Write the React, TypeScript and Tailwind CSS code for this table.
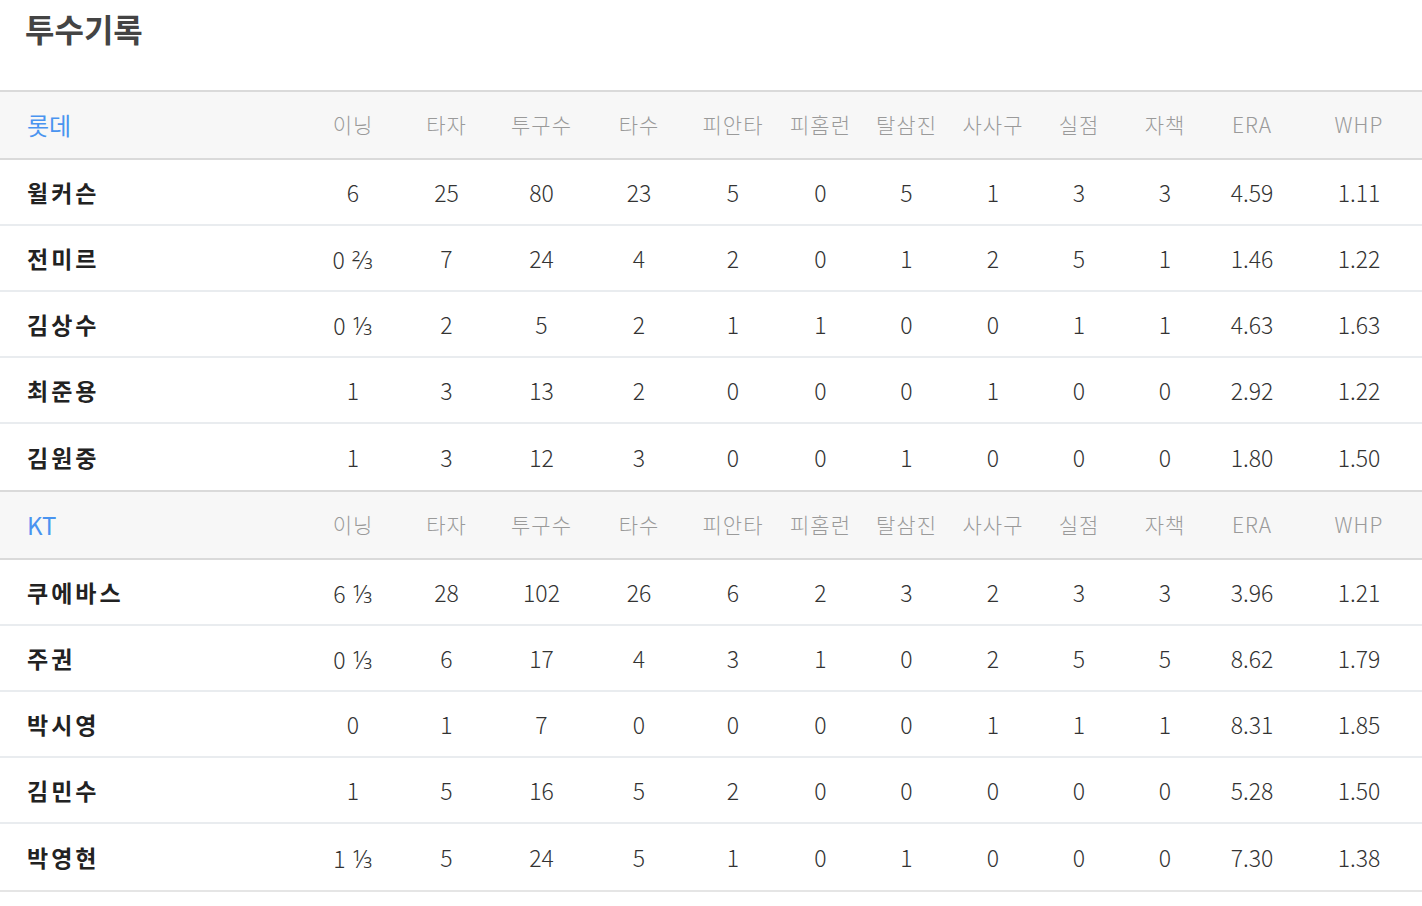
const cols = ['이닝', '타자', '투구수', '타수', '피안타', '피홈런', '탈삼진', '사사구', '실점', '자책', 'ERA', 'WHP'];

const teams = [
  {
    name: '롯데',
    rows: [
      ['윌커슨', '6', '25', '80', '23', '5', '0', '5', '1', '3', '3', '4.59', '1.11'],
      ['전미르', '0 ⅔', '7', '24', '4', '2', '0', '1', '2', '5', '1', '1.46', '1.22'],
      ['김상수', '0 ⅓', '2', '5', '2', '1', '1', '0', '0', '1', '1', '4.63', '1.63'],
      ['최준용', '1', '3', '13', '2', '0', '0', '0', '1', '0', '0', '2.92', '1.22'],
      ['김원중', '1', '3', '12', '3', '0', '0', '1', '0', '0', '0', '1.80', '1.50'],
    ],
  },
  {
    name: 'KT',
    rows: [
      ['쿠에바스', '6 ⅓', '28', '102', '26', '6', '2', '3', '2', '3', '3', '3.96', '1.21'],
      ['주권', '0 ⅓', '6', '17', '4', '3', '1', '0', '2', '5', '5', '8.62', '1.79'],
      ['박시영', '0', '1', '7', '0', '0', '0', '0', '1', '1', '1', '8.31', '1.85'],
      ['김민수', '1', '5', '16', '5', '2', '0', '0', '0', '0', '0', '5.28', '1.50'],
      ['박영현', '1 ⅓', '5', '24', '5', '1', '0', '1', '0', '0', '0', '7.30', '1.38'],
    ],
  },
];

const grid =
  'grid grid-cols-[306px_94px_93px_97px_98px_90px_85px_87px_86px_86px_86px_88px_126px] items-center';

function Innings({ v }: { v: string }) {
  const [whole, frac] = v.split(' ');
  return (
    <>
      {whole}
      {frac && <span className="ml-[7px] text-[25px]">{frac}</span>}
    </>
  );
}

export default function App() {
  return (
    <div className="w-[1422px] bg-white font-['Noto_Sans_CJK_KR','Noto_Sans',sans-serif]">
      <h1 className="h-[90px] pl-[25px] pt-[4px] text-[32px] leading-[48px] font-bold text-[#444]">투수기록</h1>

      {teams.map((team) => (
        <div key={team.name}>
          <div className={`${grid} h-[70px] bg-[#f7f7f7] border-y-2 border-[#dadada]`}>
            <div className="pl-[27px] text-[24px] text-[#4a94f0]">{team.name}</div>
            {cols.map((c) => (
              <div key={c} className="text-center text-[21px] text-[#9a9a9a] font-light tracking-[1px]">
                {c}
              </div>
            ))}
          </div>

          {team.rows.map((row, i) => (
            <div
              key={row[0]}
              className={`${grid} h-[66px] ${i < team.rows.length - 1 ? 'border-b-2 border-[#e9ecef]' : ''}`}
            >
              <div className="pl-[27px] text-[23px] font-bold tracking-[3px] text-[#222]">{row[0]}</div>
              {row.slice(1).map((v, j) => (
                <div key={j} className="text-center text-[23px] leading-[32px] font-light text-[#333]">
                  {j === 0 ? <Innings v={v} /> : v}
                </div>
              ))}
            </div>
          ))}
        </div>
      ))}
      <div className="border-t-2 border-[#e5e5e5]" />
    </div>
  );
}
